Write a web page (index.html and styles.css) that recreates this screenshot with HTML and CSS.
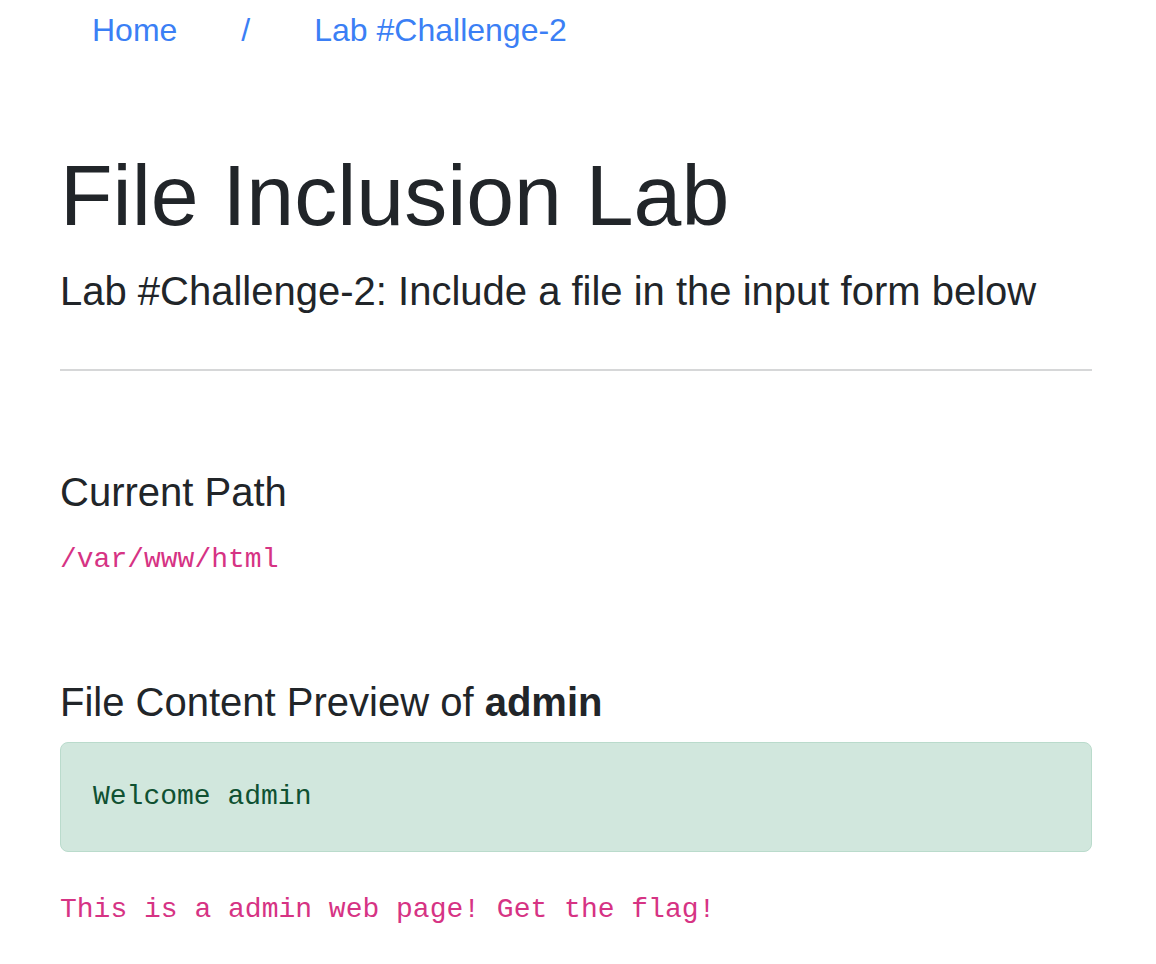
FILE: index.html
```html
<!DOCTYPE html>
<html lang="en">
<head>
<meta charset="utf-8">
<title>File Inclusion Lab</title>
<link rel="stylesheet" href="styles.css">
</head>
<body>
<nav class="crumbs">
  <a class="crumb-link" href="#">Home</a>
  <span class="crumb-link">/</span>
  <a class="crumb-link" href="#">Lab #Challenge-2</a>
</nav>
<main class="container">
  <h1 class="title">File Inclusion Lab</h1>
  <p class="lead">Lab #Challenge-2: Include a file in the input form below</p>
  <hr class="rule">
  <h5 class="section-title">Current Path</h5>
  <p class="line"><code class="code">/var/www/html</code></p>
  <h5 class="section-title section-title--second">File Content Preview of <b>admin</b></h5>
  <div class="alert-success"><pre class="preview">Welcome admin</pre></div>
  <p class="line"><code class="code">This is a admin web page! Get the flag!</code></p>
</main>
</body>
</html>
```

FILE: styles.css
```css
html, body {
  margin: 0;
  padding: 0;
  background: #ffffff;
}
body {
  font-family: "Liberation Sans", Arial, sans-serif;
  font-size: 32px;
  line-height: 1.5;
  color: #212529;
}
.crumbs {
  display: flex;
  padding-left: 60px;
}
.crumb-link {
  display: block;
  padding: 6px 32px 0;
  color: #3b7ff5;
  text-decoration: none;
  font-size: 32px;
  line-height: 48px;
}
.container {
  width: 1032px;
  margin-left: 60px;
}
.title {
  margin: 90px 0 14px;
  font-size: 86px;
  font-weight: 400;
  line-height: 1.2;
}
.lead {
  margin: 0;
  font-size: 40px;
  line-height: 60px;
}
.rule {
  margin: 48px 0 0;
  border: 0;
  border-top: 2px solid #d6d7d8;
  height: 0;
}
.section-title {
  margin: 97px 0 16px;
  font-size: 40px;
  font-weight: 400;
  line-height: 1.2;
}
.section-title--second {
  margin-top: 94px;
}
.section-title b {
  font-weight: 700;
}
.line {
  margin: 0;
  line-height: 48px;
}
.code {
  font-family: "Liberation Mono", "Courier New", monospace;
  font-size: 28px;
  color: #d63384;
}
.alert-success {
  background: #d1e7dd;
  border: 1px solid #badbcc;
  border-radius: 8px;
  padding: 33px 32px;
  margin-bottom: 30px;
  color: #0f5132;
}
.preview {
  margin: 0;
  font-family: "Liberation Mono", "Courier New", monospace;
  font-size: 28px;
  line-height: 42px;
}
```
